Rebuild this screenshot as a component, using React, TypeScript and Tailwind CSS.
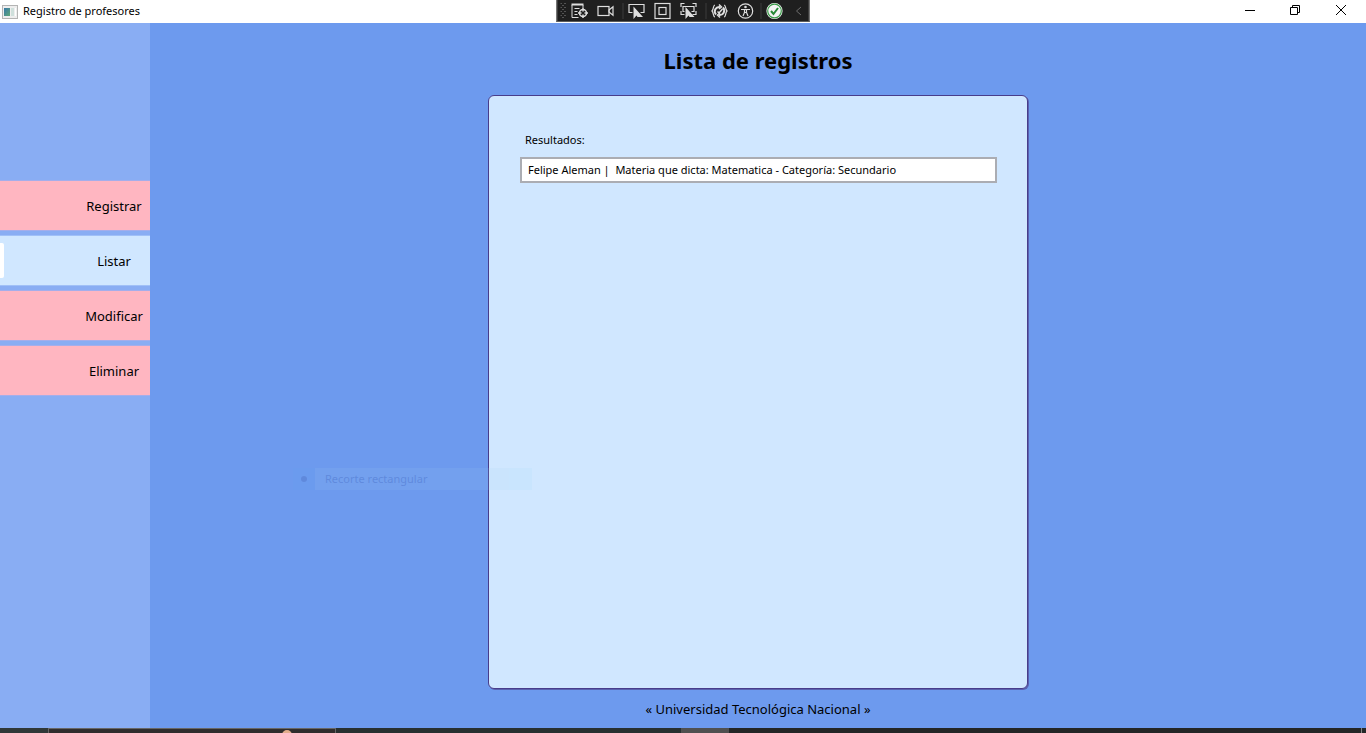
import React from "react";

const NAV_ITEMS = ["Registrar", "Listar", "Modificar", "Eliminar"];
const RECORDS = ["Felipe Aleman |  Materia que dicta: Matematica - Categoría: Secundario"];

function AppIcon() {
  return (
    <svg width="16" height="14" viewBox="0 0 16 14" aria-hidden="true">
      <defs>
        <linearGradient id="screen" x1="0" y1="0" x2="1" y2="1">
          <stop offset="0" stopColor="#3878a8" />
          <stop offset="1" stopColor="#5fa878" />
        </linearGradient>
      </defs>
      <rect x="0.5" y="0.5" width="15" height="13" fill="#eeeeee" stroke="#b4b4b4" />
      <rect x="2" y="3" width="6" height="8" fill="url(#screen)" />
      <rect x="9" y="3" width="3" height="8" fill="#cfe0dc" />
      <rect x="13" y="3" width="1" height="8" fill="#ffffff" />
    </svg>
  );
}

function Tool({ label, children }: { label: string; children: React.ReactNode }) {
  return (
    <button type="button" aria-label={label} className="flex h-5 w-[26px] items-center justify-center">
      <svg width="18" height="18" viewBox="0 0 18 18" fill="none" stroke="#dedede" strokeWidth="1.2" aria-hidden="true">
        {children}
      </svg>
    </button>
  );
}

function Separator() {
  return <span className="h-4 w-px bg-[#3d3d3d]" />;
}

function DebugToolbar() {
  return (
    <div className="absolute top-0 left-1/2 flex h-[22px] w-[253px] -translate-x-1/2 items-center border border-t-0 border-[#5c5c5c] bg-[#1f1f1f] pl-[3px]">
      <svg width="6" height="18" viewBox="0 0 6 18" aria-hidden="true" fill="#8a8a8a">
        {[1, 5, 9, 13].map((y) => (
          <g key={y}>
            <rect x="0" y={y} width="1" height="1" />
            <rect x="4" y={y} width="1" height="1" />
            <rect x="2" y={y + 2} width="1" height="1" />
          </g>
        ))}
      </svg>
      <Tool label="Árbol visual">
        <path d="M1 2.5h12" strokeWidth="2" />
        <path d="M1.5 3v12.5H8M4 6.500h5M4 9.500h3M4 12.500h3M12.500 3v3" strokeWidth="1" />
        <circle cx="12.500" cy="11" r="3.500" strokeWidth="1.500" />
        <path d="M12.500 6v3.500M12.500 12.500V16M7.500 11H11M14 11h3.500" strokeWidth="1.500" />
      </Tool>
      <Tool label="Grabar">
        <rect x="1.5" y="4.5" width="11" height="9" />
        <path d="M12.5 8l4-3.200v8.400L12.500 10z" />
      </Tool>
      <span className="w-1" />
      <Separator />
      <Tool label="Seleccionar elemento">
        <path d="M5 10.5H1.5v-8h15v8H13" />
        <path d="M6 4.5V17l3-3.500 1 1.500h5.500z" fill="#dedede" stroke="none" />
      </Tool>
      <Tool label="Mostrar adornos de diseño">
        <rect x="1.500" y="1.500" width="15" height="15" />
        <rect x="5.500" y="5.500" width="7" height="7" />
      </Tool>
      <Tool label="Realizar seguimiento del elemento">
        <path d="M1.500 5V1.500H5M13 1.500h3.500V5M1.500 9v3.500H5M13 12.500h3.500V9M5 9.500H3.500v-5h11v5H12" />
        <path d="M6 5v12l3-3.500 1 1.500h5z" fill="#dedede" stroke="none" />
      </Tool>
      <span className="w-1" />
      <Separator />
      <Tool label="Recarga activa">
        <path d="M4.500 3C2.500 3 3.500 7 1.500 9c2 2 1 6 3 6M13.500 3c2 0 1 4 3 6-2 2-1 6-3 6" />
        <path d="M5.500 12.500A4.500 4.500 0 0 1 9.500 5M12.500 5.500A4.500 4.500 0 0 1 8.500 13" strokeWidth="2" />
        <path d="M8.500 2.500l2.500 2.500-2.500 2M9.500 15.500L7 13l2.500-2M7 9.500L8.500 11 12 7" strokeWidth="1.500" />
      </Tool>
      <Tool label="Accesibilidad">
        <circle cx="9" cy="9" r="7.200" />
        <circle cx="9" cy="5" r="1.300" fill="#dedede" stroke="none" />
        <path d="M4.500 7.500H13.500M8 7.500V10.500L6.500 14M10 7.500V10.500L11.500 14M8 10.500h2" />
      </Tool>
      <span className="w-0.5" />
      <Separator />
      <Tool label="Estado correcto">
        <circle cx="9" cy="9" r="7.500" fill="#f4f4f4" stroke="#f4f4f4" />
        <circle cx="9" cy="9" r="6.800" stroke="#3a9b48" />
        <path d="M5.500 9l2.500 3 4.500-6" stroke="#288b37" strokeWidth="2" />
      </Tool>
      <button type="button" aria-label="Contraer" className="flex flex-1 items-center justify-center">
        <svg width="6" height="10" viewBox="0 0 6 10" fill="none" stroke="#6c6c6c" aria-hidden="true">
          <path d="M5.500 1L1 5l4.500 4" />
        </svg>
      </button>
    </div>
  );
}

function WindowButton({ label, children }: { label: string; children: React.ReactNode }) {
  return (
    <button type="button" aria-label={label} className="flex h-5 w-[46px] items-center justify-center">
      <svg width="12" height="12" viewBox="0 0 12 12" fill="none" stroke="#000000" aria-hidden="true">
        {children}
      </svg>
    </button>
  );
}

function TitleBar() {
  return (
    <header className="relative flex h-[23px] shrink-0 justify-between bg-white">
      <div className="flex items-center gap-1 pl-0.5">
        <AppIcon />
        <span className="pl-px text-[11px]">Registro de profesores</span>
      </div>
      <DebugToolbar />
      <div className="flex items-start pr-0.5">
        <WindowButton label="Minimizar">
          <path d="M2 6.500h10" />
        </WindowButton>
        <WindowButton label="Restaurar">
          <path d="M1.500 3.500h7v7h-7zM3.500 3.500v-2h7v7h-2" />
        </WindowButton>
        <WindowButton label="Cerrar">
          <path d="M1 1l10 10M11 1L1 11" />
        </WindowButton>
      </div>
    </header>
  );
}

function Sidebar() {
  return (
    <nav className="flex w-[150px] shrink-0 flex-col gap-1 bg-[#89adf3] pt-[157px]">
      {NAV_ITEMS.map((item) => {
        const active = item === "Listar";
        return (
          <button
            key={item}
            type="button"
            aria-current={active ? "page" : undefined}
            className={
              active
                ? "flex h-[51px] items-center justify-between border-y border-[#a0c0f7] bg-[#d0e7ff] text-[13px]"
                : "flex h-[51px] items-center justify-between border-y border-[#a5aeea] bg-[#ffb6c1] text-[13px]"
            }
          >
            <span className={active ? "h-[35px] w-1 rounded-r-xs bg-white" : "w-1"} />
            <span className="w-[72px] pt-0.5 text-center">{item}</span>
          </button>
        );
      })}
    </nav>
  );
}

function SnipTooltip() {
  return (
    <div className="absolute top-[445px] left-[143px] flex h-[22px] w-[239px] items-center text-[11px] text-[#2b4a9a] opacity-20">
      <span className="flex h-full w-[22px] items-center justify-center bg-[#68a2f2]">
        <span className="h-1.5 w-1.5 rounded-full bg-[#2b4a9a]" />
      </span>
      <span className="flex h-full flex-1 items-center bg-[#a0d4f4]/60 pl-2.5">Recorte rectangular</span>
    </div>
  );
}

function Taskbar() {
  return (
    <footer className="relative flex h-[5px] shrink-0 overflow-hidden bg-[#242828]">
      <span className="w-12 bg-[#303838]" />
      <span className="w-72 border-x border-t border-[#666666] bg-[#302d2d]" />
      <span className="absolute top-0.5 left-[282px] h-2.5 w-2.5 rounded-full bg-[#e2ad8c]" />
      <span className="flex-1 bg-[#283030]" />
      <span className="w-12 bg-[#505050]" />
      <span className="w-[632px] bg-[#242626]" />
      <span className="w-px bg-[#858585]" />
      <span className="w-1" />
    </footer>
  );
}

export default function App() {
  return (
    <div className="flex min-h-screen flex-col font-['Noto_Sans','Open_Sans',sans-serif] text-black">
      <TitleBar />
      <div className="flex flex-1">
        <Sidebar />
        <main className="relative flex flex-1 flex-col items-center bg-[#6d9aee]">
          <h1 className="flex h-[72px] items-center pt-0.5 text-[22px] font-bold">Lista de registros</h1>
          <section className="flex w-full max-w-[540px] flex-1 flex-col rounded-md border border-[#483d8b] bg-[#d0e7ff] pt-[34px] pr-[30px] pl-[31px] shadow-[1px_1px_0_#5a62b0]">
            <h2 id="results" className="h-[27px] pl-[5px] text-[11px] leading-5">Resultados:</h2>
            <ul aria-labelledby="results" className="border-2 border-[#abadb3] bg-white">
              {RECORDS.map((record) => (
                <li key={record} className="px-1.5 text-[11px] leading-[22px] whitespace-pre">{record}</li>
              ))}
            </ul>
          </section>
          <p className="flex h-[39px] items-center pt-0.5 text-[13px]">« Universidad Tecnológica Nacional »</p>
          <SnipTooltip />
        </main>
      </div>
      <Taskbar />
    </div>
  );
}
